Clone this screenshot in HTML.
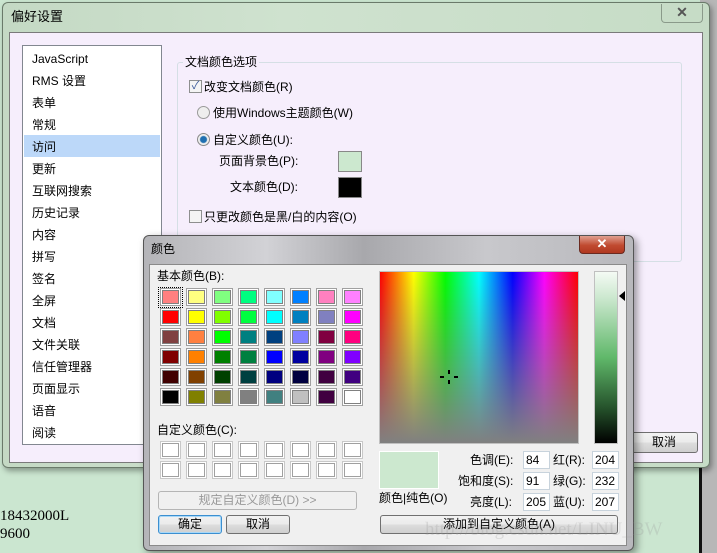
<!DOCTYPE html>
<html><head><meta charset="utf-8"><style>
*{margin:0;padding:0;box-sizing:border-box}
body{width:717px;height:553px;overflow:hidden;position:relative;background:#cbe6d0;font-family:"Liberation Sans","Noto Sans CJK SC",sans-serif;font-size:12px;color:#000}
.a{position:absolute}
.t{position:absolute;white-space:nowrap;line-height:14px}
.sw{position:absolute;width:19px;height:16px;border:1px solid #fff;outline:1px solid #a0a0a0;}
.sw i{display:block;width:100%;height:100%;border:1px solid #808080}
.btn{position:absolute;border:1px solid #707070;border-radius:3px;background:linear-gradient(#f2f2f2,#ebebeb 50%,#dddddd 51%,#cfcfcf);text-align:center;line-height:16px}
.inp{position:absolute;background:#fff;border:1px solid #c8d3dc;height:18px;width:27px;line-height:16px;padding-left:2px;font-size:12px}
</style></head><body>
<div class="a" style="left:700px;top:0;width:17px;height:553px;background:#b7b7b7"></div>
<div class="a" style="left:699px;top:466px;width:3px;height:87px;background:#111"></div>
<div class="a" style="left:2px;top:2px;width:708px;height:466px;border:1px solid #6a7a6a;border-radius:6px;background:linear-gradient(90deg,#c4d9c4,#cfe2cf 40%,#c6dcc6);box-shadow:2px 3px 6px rgba(0,0,0,.35)"></div>
<div class="t" style="left:11px;top:10px;font-size:13px">偏好设置</div>
<div class="a" style="left:661px;top:4px;width:42px;height:19px;border:1px solid #8a9a8a;border-top:none;border-radius:0 0 4px 4px;color:#555;font-weight:bold;text-align:center;font-size:14px;line-height:16px">✕</div>
<div class="a" style="left:9px;top:32px;width:694px;height:431px;background:#f6eefc;border:1px solid #7a7a7a"></div>
<div class="a" style="left:22px;top:45px;width:140px;height:400px;background:#fff;border:1px solid #828790"></div>
<div class="a" style="left:24px;top:135px;width:136px;height:22px;background:#bcd8f9"></div>
<div class="t" style="left:32px;top:48px;line-height:22px">JavaScript<br>RMS 设置<br>表单<br>常规<br>访问<br>更新<br>互联网搜索<br>历史记录<br>内容<br>拼写<br>签名<br>全屏<br>文档<br>文件关联<br>信任管理器<br>页面显示<br>语音<br>阅读</div>
<div class="a" style="left:177px;top:62px;width:505px;height:200px;border:1px solid #d5dfe5;border-radius:3px"></div>
<div class="t" style="left:183px;top:55px;background:#f6eefc;padding:0 2px">文档颜色选项</div>
<div class="a" style="left:189px;top:80px;width:13px;height:13px;border:1px solid #8e8f8f;background:#f4f4f4;color:#3a5a9a;font-size:11px;line-height:11px;text-align:center">✓</div>
<div class="t" style="left:204px;top:80px">改变文档颜色(R)</div>
<div class="a" style="left:197px;top:106px;width:13px;height:13px;border:1px solid #9a9a9a;border-radius:50%;background:#eee"></div>
<div class="t" style="left:213px;top:106px">使用Windows主题颜色(W)</div>
<div class="a" style="left:197px;top:133px;width:13px;height:13px;border:1px solid #8a8a8a;border-radius:50%;background:radial-gradient(circle,#1f6fb0 0 3px,#eee 4px)"></div>
<div class="t" style="left:213px;top:133px">自定义颜色(U):</div>
<div class="t" style="left:219px;top:154px">页面背景色(P):</div>
<div class="a" style="left:338px;top:151px;width:24px;height:21px;background:#cce8cf;border:1px solid #888"></div>
<div class="t" style="left:230px;top:180px">文本颜色(D):</div>
<div class="a" style="left:338px;top:177px;width:24px;height:21px;background:#000;border:1px solid #888"></div>
<div class="a" style="left:189px;top:210px;width:13px;height:13px;border:1px solid #8e8f8f;background:#f4f4f4"></div>
<div class="t" style="left:204px;top:210px">只更改颜色是黑/白的内容(O)</div>
<div class="btn" style="left:630px;top:432px;width:68px;height:21px;line-height:19px">取消</div>
<div class="t" style="left:0;top:507px;font-family:'Liberation Serif',serif;font-size:15px;line-height:18px">18432000L<br>9600</div>
<div class="a" style="left:143px;top:235px;width:491px;height:316px;border:1px solid #555;border-radius:6px;background:linear-gradient(90deg,#b4b4b8,#d2d2d6 25%,#a8a8ac 45%,#c8c8cc 70%,#b8b8bc);box-shadow:3px 3px 8px rgba(0,0,0,.4)"></div>
<div class="t" style="left:151px;top:242px">颜色</div>
<div class="a" style="left:579px;top:236px;width:46px;height:18px;border:1px solid #6a2a20;border-top:none;border-radius:0 0 4px 4px;background:linear-gradient(#e0a090,#c04a30 55%,#b03820);color:#fff;font-weight:bold;text-align:center;font-size:13px;line-height:16px">✕</div>
<div class="a" style="left:149px;top:264px;width:478px;height:282px;background:#f0f0f0;border:1px solid #8a8a8a"></div>
<div class="t" style="left:157px;top:269px">基本颜色(B):</div>
<div id="g"></div>
<div class="a" style="left:158px;top:287px;width:25px;height:21px;border:1px dotted #000"></div>
<div class="t" style="left:157px;top:423px">自定义颜色(C):</div>
<div class="btn" style="left:158px;top:491px;width:199px;height:19px;color:#999;border-color:#b5b5b5;background:#f0f0f0">规定自定义颜色(D) &gt;&gt;</div>
<div class="btn" style="left:158px;top:515px;width:64px;height:19px;border-color:#3c8fd0;box-shadow:inset 0 0 0 1px #a8d8f8">确定</div>
<div class="btn" style="left:226px;top:515px;width:64px;height:19px">取消</div>
<div class="a" style="left:379px;top:271px;width:200px;height:173px;border:1px solid #c0c0c0;background:linear-gradient(rgba(128,128,128,0),#808080),linear-gradient(90deg,#f00,#ff0 17%,#0f0 33%,#0ff 50%,#00f 67%,#f0f 83%,#f00)"></div>
<div class="a" style="left:448px;top:370px;width:2px;height:4px;background:#000"></div>
<div class="a" style="left:448px;top:380px;width:2px;height:4px;background:#000"></div>
<div class="a" style="left:440px;top:376px;width:4px;height:2px;background:#000"></div>
<div class="a" style="left:454px;top:376px;width:4px;height:2px;background:#000"></div>
<div class="a" style="left:594px;top:271px;width:24px;height:173px;border:1px solid #c0c0c0;background:linear-gradient(#f4faf4,#cce8cf 15%,#60b86a 50%,#24502a 80%,#000)"></div>
<div class="a" style="left:619px;top:291px;width:0;height:0;border-top:5px solid transparent;border-bottom:5px solid transparent;border-right:6px solid #000"></div>
<div class="a" style="left:379px;top:451px;width:60px;height:38px;background:#cce8cf;border:1px solid #fff"></div>
<div class="t" style="left:379px;top:491px">颜色|纯色(O)</div>
<div class="t" style="left:470px;top:453px">色调(E):</div>
<div class="t" style="left:458px;top:474px">饱和度(S):</div>
<div class="t" style="left:470px;top:495px">亮度(L):</div>
<div class="inp" style="left:523px;top:451px">84</div>
<div class="inp" style="left:523px;top:472px">91</div>
<div class="inp" style="left:523px;top:493px">205</div>
<div class="t" style="left:553px;top:453px">红(R):</div>
<div class="t" style="left:553px;top:474px">绿(G):</div>
<div class="t" style="left:553px;top:495px">蓝(U):</div>
<div class="inp" style="left:592px;top:451px">204</div>
<div class="inp" style="left:592px;top:472px">232</div>
<div class="inp" style="left:592px;top:493px">207</div>
<div class="btn" style="left:380px;top:515px;width:238px;height:19px">添加到自定义颜色(A)</div>
<div class="t" style="left:425px;top:520px;font-family:'Liberation Serif',serif;font-size:19px;line-height:20px;color:rgba(150,150,150,.25)">http://blog.csdn.net/LINU_BW</div>
<script>
var c=[["#ff8080","#ffff80","#80ff80","#00ff80","#80ffff","#0080ff","#ff80c0","#ff80ff"],["#ff0000","#ffff00","#80ff00","#00ff40","#00ffff","#0080c0","#8080c0","#ff00ff"],["#804040","#ff8040","#00ff00","#008080","#004080","#8080ff","#800040","#ff0080"],["#800000","#ff8000","#008000","#008040","#0000ff","#0000a0","#800080","#8000ff"],["#400000","#804000","#004000","#004040","#000080","#000040","#400040","#400080"],["#000000","#808000","#808040","#808080","#408080","#c0c0c0","#400040","#ffffff"]];
var h="";
for(var r=0;r<6;r++)for(var k=0;k<8;k++)h+='<div class="sw" style="left:'+(161+k*26)+'px;top:'+(289+r*20)+'px"><i style="background:'+c[r][k]+'"></i></div>';
for(var r=0;r<2;r++)for(var k=0;k<8;k++)h+='<div class="sw" style="left:'+(161+k*26)+'px;top:'+(442+r*20)+'px;outline-color:#c8c8c8"><i style="background:#fff;border-color:#a0a0a0"></i></div>';
document.getElementById("g").innerHTML=h;
</script>
</body></html>
